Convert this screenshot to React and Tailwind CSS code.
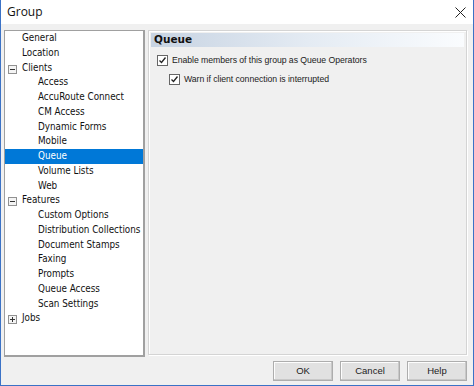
const TREE = [
  ['General', 1], ['Location', 1], ['Clients', 1, 'minus'],
  ['Access', 2], ['AccuRoute Connect', 2], ['CM Access', 2], ['Dynamic Forms', 2], ['Mobile', 2],
  ['Queue', 2, null, true], ['Volume Lists', 2], ['Web', 2],
  ['Features', 1, 'minus'],
  ['Custom Options', 2], ['Distribution Collections', 2], ['Document Stamps', 2], ['Faxing', 2],
  ['Prompts', 2], ['Queue Access', 2], ['Scan Settings', 2],
  ['Jobs', 1, 'plus'],
]

function Expander({ kind }) {
  return (
    <span className="absolute left-[3px] top-[4px] w-[9px] h-[9px] border border-[#919191] bg-[#f4f4f4] flex items-center justify-center">
      <span className="absolute w-[5px] h-[1px] bg-[#333]" />
      {kind === 'plus' && <span className="absolute w-[1px] h-[5px] bg-[#333]" />}
    </span>
  )
}

function Check({ label }) {
  return (
    <div className="flex items-center gap-[4px]">
      <span className="w-[11px] h-[11px] border border-[#666] bg-white flex items-center justify-center">
        <svg width="9" height="9" viewBox="0 0 9 9">
          <path d="M1.5 4.5 L3.5 6.5 L7.5 1.5" stroke="#222" strokeWidth="1.3" fill="none" />
        </svg>
      </span>
      <span className="text-[8.7px] text-[#222] tracking-[-0.05px] whitespace-nowrap">{label}</span>
    </div>
  )
}

function Btn({ children }) {
  return (
    <button className="w-[60px] h-[20px] border border-[#adadad] bg-[#e1e1e1] text-[9.5px] text-[#222] shadow-[inset_-1px_-1px_0_#c8c8c8,inset_1px_1px_0_#fdfdfd]">
      {children}
    </button>
  )
}

export default function App() {
  return (
    <div className="w-[474px] h-[386px] flex flex-col bg-[#f0f0f0] border-x border-b border-[#3b72c6] font-['Liberation_Sans',Arial,sans-serif] overflow-hidden">
      {/* titlebar */}
      <div className="h-[24px] bg-white flex items-center justify-between pl-[6px] pr-[7px] shrink-0">
        <span className="text-[12px] text-[#111] font-['Open_Sans',sans-serif]">Group</span>
        <svg width="11" height="11" viewBox="0 0 11 11">
          <path d="M0.5 0.5 L10.5 10.5 M10.5 0.5 L0.5 10.5" stroke="#222" strokeWidth="1" />
        </svg>
      </div>

      <div className="flex gap-[3px] pl-[3px] pr-[6px] pt-[6px]">
        {/* tree */}
        <div className="w-[141px] h-[327px] bg-white border border-[#a0a0a0] border-r-2 border-b-2 font-['DejaVu_Sans_Condensed','DejaVu_Sans',sans-serif] text-[9.8px] text-[#111]">
          {TREE.map(([label, lvl, exp, sel]) => (
            <div key={label}
              className={`relative h-[14.75px] leading-[14.75px] whitespace-nowrap ${lvl === 1 ? 'pl-[17px]' : 'pl-[33px]'} ${sel ? 'bg-[#0078d7] text-white' : ''}`}>
              {exp && <Expander kind={exp} />}
              {label}
            </div>
          ))}
        </div>

        {/* content */}
        <div className="flex-1 h-[325px] border border-[#d4d4d4] shadow-[inset_1px_1px_0_#ffffff,1px_1px_0_#ffffff] p-[2px]">
          <div className="h-[14px] bg-gradient-to-r from-[#c7d3e2] via-[#e4ebf3] to-[#fafcfe] pl-[3px] flex items-center">
            <span className="font-['DejaVu_Sans',Verdana,sans-serif] font-bold text-[10.5px] text-[#111]">Queue</span>
          </div>
          <div className="pl-[6px] pt-[7px] flex flex-col gap-[6px]">
            <Check label="Enable members of this group as Queue Operators" />
            <div className="pl-[12px]">
              <Check label="Warn if client connection is interrupted" />
            </div>
          </div>
        </div>
      </div>

      <div className="flex justify-end gap-[7px] pr-[6px] pt-[4px]">
        <Btn>OK</Btn>
        <Btn>Cancel</Btn>
        <Btn>Help</Btn>
      </div>
    </div>
  )
}
